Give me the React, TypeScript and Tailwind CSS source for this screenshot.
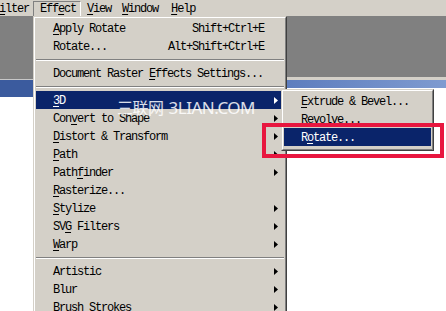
import type { ReactNode } from "react";

type MenuRow =
  | { kind: "sep" }
  | { kind: "item"; label: ReactNode; shortcut?: string; sub?: boolean; active?: boolean };

const u = (ch: string) => <span className="underline underline-offset-2">{ch}</span>;

const effectRows: MenuRow[] = [
  { kind: "item", label: <>{u("A")}pply Rotate</>, shortcut: "Shift+Ctrl+E" },
  { kind: "item", label: "Rotate...", shortcut: "Alt+Shift+Ctrl+E" },
  { kind: "sep" },
  { kind: "item", label: <>Document Raster {u("E")}ffects Settings...</> },
  { kind: "sep" },
  { kind: "item", label: <>{u("3")}D</>, sub: true, active: true },
  { kind: "item", label: <>Con{u("v")}ert to Shape</>, sub: true },
  { kind: "item", label: <>{u("D")}istort &amp; Transform</>, sub: true },
  { kind: "item", label: <>{u("P")}ath</>, sub: true },
  { kind: "item", label: <>Path{u("f")}inder</>, sub: true },
  { kind: "item", label: <>{u("R")}asterize...</> },
  { kind: "item", label: <>{u("S")}tylize</>, sub: true },
  { kind: "item", label: <>SV{u("G")} Filters</>, sub: true },
  { kind: "item", label: <>{u("W")}arp</>, sub: true },
  { kind: "sep" },
  { kind: "item", label: "Artistic", sub: true },
  { kind: "item", label: "Blur", sub: true },
  { kind: "item", label: "Brush Strokes", sub: true },
];

const threeDRows: MenuRow[] = [
  { kind: "item", label: <>{u("E")}xtrude &amp; Bevel...</> },
  { kind: "item", label: <>Re{u("v")}olve...</> },
  { kind: "item", label: <>R{u("o")}tate...</>, active: true },
];

function Arrow({ white }: { white?: boolean }) {
  return (
    <svg width="4" height="7" viewBox="0 0 4 7" className="shrink-0">
      <path d="M0 0 L4 3.5 L0 7 Z" fill={white ? "#ffffff" : "#000000"} />
    </svg>
  );
}

function MenuPanel({ rows, className }: { rows: MenuRow[]; className: string }) {
  return (
    <div className={`absolute border border-t-[#d4d0c8] border-l-[#d4d0c8] border-r-[#404040] border-b-[#404040] bg-[#d4d0c8] ${className}`}>
      <div className="h-full border border-t-white border-l-white border-r-[#808080] border-b-[#808080] px-px pt-[1px]">
        {rows.map((row, i) =>
          row.kind === "sep" ? (
            <div key={i} className="flex h-[9px] flex-col justify-center">
              <div className="h-px bg-[#808080]" />
              <div className="h-px bg-white" />
            </div>
          ) : (
            <div
              key={i}
              className={`flex h-[18px] items-center pl-[17px] pr-[6px] ${row.active ? "bg-[#0a246a] text-white" : "text-black"}`}
            >
              <span className="flex-1 whitespace-nowrap pt-[2px]">{row.label}</span>
              {row.shortcut ? <span className="mr-[14px] whitespace-nowrap pt-[2px]">{row.shortcut}</span> : null}
              {row.sub ? <Arrow white={row.active} /> : null}
            </div>
          ),
        )}
      </div>
    </div>
  );
}

export default function App() {
  return (
    <div className="relative h-[311px] w-[446px] overflow-hidden bg-white font-['Liberation_Mono',monospace] text-[12px] leading-none tracking-[-1.2px]">
      {/* menu bar */}
      <div className="flex h-[16px] items-center bg-[#d4d0c8] pt-px text-black">
        <span className="ml-[-7px] whitespace-nowrap">F{u("i")}lter</span>
        <span className="ml-[4px] flex h-[16px] w-[48px] items-center border border-t-[#808080] border-l-[#808080] border-r-white border-b-white pl-[6px]">
          Eff{u("e")}ct
        </span>
        <span className="ml-[6px]">{u("V")}iew</span>
        <span className="ml-[11px]">{u("W")}indow</span>
        <span className="ml-[13px]">{u("H")}elp</span>
      </div>

      {/* desktop behind the menus */}
      <div className="flex">
        <div className="w-[33px]">
          <div className="h-[63px] bg-[#808080]" />
          <div className="h-px bg-[#c8c8c8]" />
          <div className="h-[17px] bg-[#3b5b9e]" />
        </div>
        <div className="w-[254px]" />
        <div className="flex-1">
          <div className="h-[61px] bg-[#808080]" />
          <div className="h-[3px] bg-[#d4d0c8]" />
          <div className="h-[8px] bg-gradient-to-r from-[#5d7dbe] to-[#7f9bd0]" />
        </div>
      </div>

      <MenuPanel rows={effectRows} className="left-[33px] top-[16px] h-[310px] w-[254px]" />
      <MenuPanel rows={threeDRows} className="left-[281px] top-[89px] h-[62px] w-[153px]" />

      {/* watermark */}
      <div className="pointer-events-none absolute left-[117px] top-[99px] flex items-baseline gap-[5px] whitespace-nowrap font-['Noto_Sans','Noto_Sans_CJK_SC',sans-serif] leading-none tracking-[-0.5px] text-white/85">
        <span className="text-[16px]">三联网</span>
        <span className="text-[17px]">3LIAN.COM</span>
      </div>

      {/* highlight frame */}
      <div className="pointer-events-none absolute left-[262px] top-[123px] h-[35px] w-[182px] border-4 border-[#e8163f]" />
    </div>
  );
}
